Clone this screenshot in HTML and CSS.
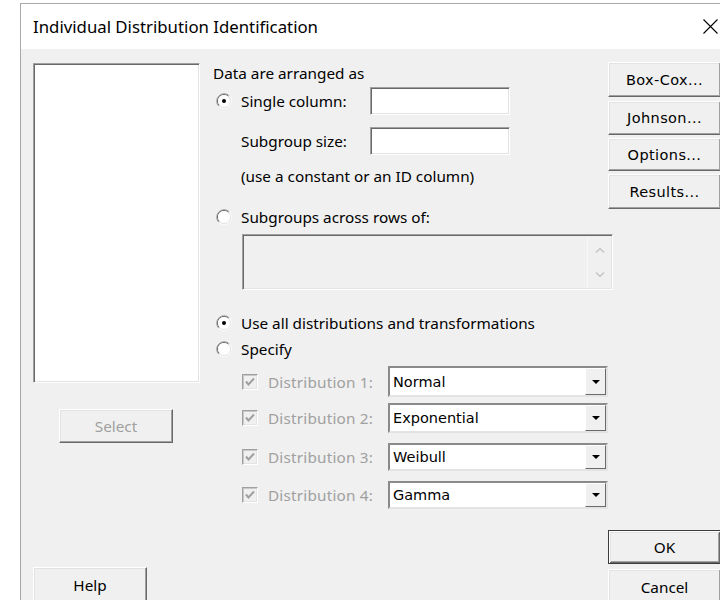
FILE: index.html
```html
<!DOCTYPE html>
<html lang="en">
<head>
<meta charset="utf-8">
<title>Individual Distribution Identification</title>
<link rel="stylesheet" href="styles.css">
</head>
<body>
<svg class="sprites" width="0" height="0" aria-hidden="true">
  <defs>
    <symbol id="radio" viewBox="0 0 16 16">
      <path d="M2.7 13.3A7.5 7.5 0 0 1 13.3 2.7" fill="none" stroke="#a0a0a0"/>
      <path d="M13.3 2.7A7.5 7.5 0 0 1 2.7 13.3" fill="none" stroke="#ffffff"/>
      <path d="M3.4 12.6A6.5 6.5 0 0 1 12.6 3.4" fill="none" stroke="#696969"/>
      <path d="M12.6 3.4A6.5 6.5 0 0 1 3.4 12.6" fill="none" stroke="#e3e3e3"/>
      <circle cx="8" cy="8" r="6" fill="#ffffff"/>
    </symbol>
    <symbol id="radio-on" viewBox="0 0 16 16">
      <use href="#radio"/>
      <circle cx="8" cy="8" r="2" fill="#000000"/>
    </symbol>
  </defs>
</svg>

<div class="window">
  <div class="titlebar">
    <span class="title">Individual Distribution Identification</span>
    <svg class="close" width="15" height="15" viewBox="0 0 15 15" aria-label="Close">
      <path d="M0.5 0.5L14.5 14.5M14.5 0.5L0.5 14.5" stroke="#000" stroke-width="1.1"/>
    </svg>
  </div>

  <div class="client">
    <div class="left">
      <div class="listbox"></div>
      <button class="btn btn-select" disabled>Select</button>
      <button class="btn btn-help">Help</button>
    </div>

    <div class="main">
      <div class="top">
        <div class="fields">
          <div class="caption">Data are arranged as</div>
          <div class="field-row row-single">
            <label class="radio"><svg width="16" height="16"><use href="#radio-on"/></svg>Single column:</label>
            <span class="edit"></span>
          </div>
          <div class="field-row row-size">
            <span class="lbl">Subgroup size:</span>
            <span class="edit"></span>
          </div>
          <div class="hint">(use a constant or an ID column)</div>
        </div>
        <div class="side">
          <button class="btn btn-side bc">Box-Cox...</button>
          <button class="btn btn-side jo">Johnson...</button>
          <button class="btn btn-side op">Options...</button>
          <button class="btn btn-side re">Results...</button>
        </div>
      </div>

      <label class="radio rows-radio"><svg width="16" height="16"><use href="#radio"/></svg>Subgroups across rows of:</label>
      <div class="memo">
        <div class="vscroll">
          <svg width="10" height="6" viewBox="0 0 10 6"><path d="M1 5.5L5 1.5L9 5.5" fill="none" stroke="#bfbfbf" stroke-width="1.2"/></svg>
          <svg width="10" height="6" viewBox="0 0 10 6"><path d="M1 0.5L5 4.5L9 0.5" fill="none" stroke="#bfbfbf" stroke-width="1.2"/></svg>
        </div>
      </div>

      <label class="radio use-all"><svg width="16" height="16"><use href="#radio-on"/></svg>Use all distributions and transformations</label>
      <label class="radio specify"><svg width="16" height="16"><use href="#radio"/></svg>Specify</label>

      <div class="dist d1">
        <span class="check"><svg width="14" height="14" viewBox="0 0 14 14"><path d="M3 6.5L5.5 9.5L11 3.5" fill="none" stroke="#a0a0a0" stroke-width="2"/></svg></span>
        <span class="dist-lbl">Distribution 1:</span>
        <div class="combo"><span class="combo-text">Normal</span><span class="combo-btn"><i class="tri"></i></span></div>
      </div>
      <div class="dist d2">
        <span class="check"><svg width="14" height="14" viewBox="0 0 14 14"><path d="M3 6.5L5.5 9.5L11 3.5" fill="none" stroke="#a0a0a0" stroke-width="2"/></svg></span>
        <span class="dist-lbl">Distribution 2:</span>
        <div class="combo"><span class="combo-text">Exponential</span><span class="combo-btn"><i class="tri"></i></span></div>
      </div>
      <div class="dist d3">
        <span class="check"><svg width="14" height="14" viewBox="0 0 14 14"><path d="M3 6.5L5.5 9.5L11 3.5" fill="none" stroke="#a0a0a0" stroke-width="2"/></svg></span>
        <span class="dist-lbl">Distribution 3:</span>
        <div class="combo"><span class="combo-text">Weibull</span><span class="combo-btn"><i class="tri"></i></span></div>
      </div>
      <div class="dist d4">
        <span class="check"><svg width="14" height="14" viewBox="0 0 14 14"><path d="M3 6.5L5.5 9.5L11 3.5" fill="none" stroke="#a0a0a0" stroke-width="2"/></svg></span>
        <span class="dist-lbl">Distribution 4:</span>
        <div class="combo"><span class="combo-text">Gamma</span><span class="combo-btn"><i class="tri"></i></span></div>
      </div>

      <button class="btn btn-default btn-ok">OK</button>
      <button class="btn btn-cancel">Cancel</button>
    </div>
  </div>
</div>
</body>
</html>
```

FILE: styles.css
```css
* { box-sizing: border-box; }

body {
  margin: 0;
  width: 720px;
  height: 600px;
  overflow: hidden;
  background: #ffffff;
  font-family: "Noto Sans", "Open Sans", sans-serif;
  font-size: 15.3px;
  color: #000;
}

.sprites { position: absolute; width: 0; height: 0; }

/* dialog frame */
.window {
  margin: 3px 0 0 20px;
  width: 700px;
  height: 620px;
  border-left: 1px solid #a8a8a8;
  border-top: 1px solid #a8a8a8;
  background: #f0f0f0;
}

.titlebar {
  height: 45px;
  background: #ffffff;
  display: flex;
  align-items: center;
  padding-left: 12px;
}

.title {
  font-size: 16.8px;
  color: #000;
}

.close {
  margin-left: auto;
  margin-right: 2px;
}

/* client area */
.client {
  display: flex;
  padding: 14px 0 0 12px;
}

.btn {
  display: block;
  padding: 0;
  margin: 0;
  font-family: "Noto Sans", "Open Sans", sans-serif;
  font-size: 15.3px;
  color: #000;
  background: #f0f0f0;
  border: 1px solid;
  border-color: #ffffff #696969 #696969 #ffffff;
  box-shadow: inset -1px -1px 0 #a0a0a0, inset 1px 1px 0 #e3e3e3;
}

.btn-default {
  border: 1px solid #3c3c3c;
  box-shadow: inset 1px 1px 0 #ffffff, inset -1px -1px 0 #696969,
              inset 2px 2px 0 #e3e3e3, inset -2px -2px 0 #a0a0a0;
}

/* left column: variable list */
.left {
  width: 167px;
  display: flex;
  flex-direction: column;
  align-items: flex-start;
}

.listbox {
  width: 167px;
  height: 320px;
  background: #ffffff;
  border: 1px solid;
  border-color: #a0a0a0 #ffffff #ffffff #a0a0a0;
  box-shadow: inset 1px 1px 0 #696969, inset -1px -1px 0 #e3e3e3;
}

.btn-select {
  margin: 26px 0 0 26px;
  width: 114px;
  height: 34px;
  color: #a0a0a0;
}

.btn-help {
  margin-top: 124px;
  width: 114px;
  height: 35px;
}

/* main column */
.main {
  margin-left: 13px;
  width: 508px;
  display: flex;
  flex-direction: column;
  align-items: flex-start;
}

.top {
  display: flex;
  align-items: flex-start;
}

.fields {
  width: 395px;
}

.caption {
  line-height: 20px;
}

.field-row {
  display: grid;
  grid-template-columns: 157px 140px;
  align-items: center;
  height: 28px;
}

.row-single { margin-top: 4px; }
.row-size { margin-top: 12px; }
.row-size .lbl { padding-left: 28px; }

.edit {
  height: 28px;
  background: #ffffff;
  border: 1px solid;
  border-color: #a0a0a0 #ffffff #ffffff #a0a0a0;
  box-shadow: inset 1px 1px 0 #696969, inset -1px -1px 0 #e3e3e3;
}

.hint {
  margin-top: 11px;
  padding-left: 28px;
  line-height: 20px;
}

.side {
  width: 113px;
  margin-top: -1px;
  display: flex;
  flex-direction: column;
}

.btn-side {
  width: 113px;
  font-family: "DejaVu Sans", Verdana, sans-serif;
  font-size: 14.5px;
  letter-spacing: 0.4px;
}

.bc { height: 35px; }
.jo { height: 34px; margin-top: 4px; }
.op { height: 33px; margin-top: 3px; }
.re { height: 35px; margin-top: 3px; }

/* radio buttons */
.radio {
  display: flex;
  align-items: center;
  gap: 9px;
  padding-left: 3px;
  line-height: 18px;
}

.radio svg { flex: none; }

.rows-radio { margin-top: -1px; }

.memo {
  margin: 8px 0 0 29px;
  width: 371px;
  height: 56px;
  display: flex;
  justify-content: flex-end;
  background: #f0f0f0;
  border: 1px solid;
  border-color: #a0a0a0 #ffffff #ffffff #a0a0a0;
  box-shadow: inset 1px 1px 0 #696969, inset -1px -1px 0 #e3e3e3;
}

.vscroll {
  width: 24px;
  margin: 1px 1px 1px 0;
  border-left: 1px solid #f7f7f7;
  display: flex;
  flex-direction: column;
  align-items: center;
  justify-content: space-between;
  padding: 11px 0 10px;
}

.use-all { margin-top: 24px; }
.specify { margin-top: 8px; }

/* distribution rows */
.dist {
  display: grid;
  grid-template-columns: 26px 120px 220px;
  align-items: center;
  padding-left: 29px;
}

.d1 { margin-top: 8px; height: 31px; }
.d2 { margin-top: 6px; height: 30px; }
.d3 { margin-top: 10px; height: 28px; }
.d4 { margin-top: 10px; height: 28px; }

.check {
  width: 16px;
  height: 16px;
  display: flex;
  align-items: center;
  justify-content: center;
  background: #f0f0f0;
  border: 1px solid;
  border-color: #a0a0a0 #ffffff #ffffff #a0a0a0;
  box-shadow: inset 1px 1px 0 #c8c8c8, inset -1px -1px 0 #e3e3e3;
}

.dist-lbl {
  color: #a0a0a0;
  letter-spacing: 0.2px;
}

.combo {
  height: 100%;
  display: flex;
  background: #ffffff;
  border: 2px solid;
  border-color: #8a8a8a #e3e3e3 #e3e3e3 #8a8a8a;
}

.combo-text {
  flex: 1;
  padding-left: 3px;
  display: flex;
  align-items: center;
  font-family: "DejaVu Sans", Verdana, sans-serif;
  font-size: 14.5px;
}

.combo-btn {
  width: 21px;
  display: flex;
  align-items: center;
  justify-content: center;
  background: #f0f0f0;
  border: 1px solid;
  border-color: #ffffff #696969 #696969 #ffffff;
}

.tri {
  width: 0;
  height: 0;
  border-left: 4px solid transparent;
  border-right: 4px solid transparent;
  border-top: 4px solid #000;
}

/* dialog buttons */
.btn-ok {
  margin: 21px 0 0 395px;
  width: 113px;
  height: 34px;
}

.btn-cancel {
  margin: 5px 0 0 395px;
  width: 113px;
  height: 35px;
}
```
